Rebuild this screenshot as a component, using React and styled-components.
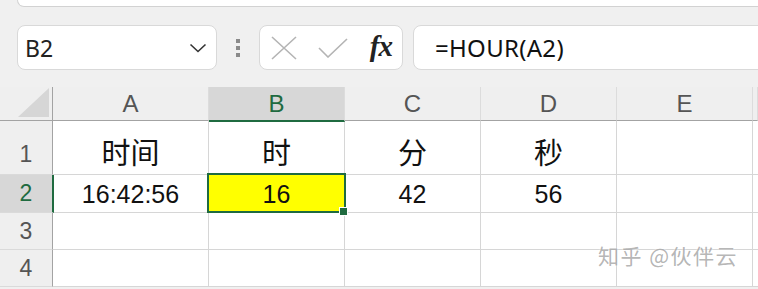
import React from 'react';
import styled, { createGlobalStyle } from 'styled-components';

const GlobalStyle = createGlobalStyle`
  html, body {
    margin: 0;
    padding: 0;
    background: #f0f0f0;
    overflow: hidden;
  }
  body {
    font-family: "Noto Sans", "Noto Sans CJK SC", sans-serif;
  }
`;

const columns = ['A', 'B', 'C', 'D', 'E'];
const rows = [
  { num: 1, height: 54, size: 29, cells: ['时间', '时', '分', '秒', ''] },
  { num: 2, height: 38, size: 25, cells: ['16:42:56', '16', '42', '56', ''] },
  { num: 3, height: 37, size: 25, cells: ['', '', '', '', ''] },
  { num: 4, height: 37, size: 25, cells: ['', '', '', '', ''] },
];

export default function App() {
  return (
    <Page>
      <GlobalStyle />
      <TopStrip>
        <TopBox />
      </TopStrip>
      <Toolbar>
        <NameBox>
          <span>B2</span>
          <svg width="18" height="10" viewBox="0 0 18 10">
            <path d="M1.5 1.5 L9 8.5 L16.5 1.5" fill="none" stroke="#333" strokeWidth="1.6" />
          </svg>
        </NameBox>
        <Grip>
          <i />
          <i />
          <i />
        </Grip>
        <FxBox>
          <svg width="26" height="24" viewBox="0 0 26 24">
            <path d="M1 1 L25 23 M25 1 L1 23" stroke="#b4b4b4" strokeWidth="1.6" />
          </svg>
          <svg width="30" height="20" viewBox="0 0 30 20">
            <path d="M1 10 L10 19 L29 1" fill="none" stroke="#b4b4b4" strokeWidth="1.6" />
          </svg>
          <Fx>fx</Fx>
        </FxBox>
        <FormulaInput>=HOUR(A2)</FormulaInput>
      </Toolbar>
      <Sheet>
        <Corner>
          <svg width="31" height="29" viewBox="0 0 31 29">
            <path d="M31 0 L31 29 L0 29 Z" fill="#d6d6d6" />
          </svg>
        </Corner>
        {columns.map((c) => (
          <ColHeader key={c} $active={c === 'B'}>{c}</ColHeader>
        ))}
        <ColHeader $rest />
        {rows.map((r) => (
          <React.Fragment key={r.num}>
            <RowHeader $active={r.num === 2} $h={r.height}>{r.num}</RowHeader>
            {r.cells.map((t, i) => (
              <Cell
                key={i}
                $size={r.size}
                $bottom={r.num === 1}
                $selected={r.num === 2 && i === 1}
                $fill={r.num === 2 && i === 1}
              >
                {t}
              </Cell>
            ))}
            <Cell $rest />
          </React.Fragment>
        ))}
      </Sheet>
      <Watermark>知乎 @伙伴云</Watermark>
    </Page>
  );
}

const Page = styled.div`
  position: relative;
  width: 758px;
  height: 289px;
  overflow: hidden;
  background: #f0f0f0;
`;

const TopStrip = styled.div`
  height: 25px;
  padding-left: 17px;
`;

const TopBox = styled.div`
  height: 6px;
  background: #fff;
  border: 1px solid #d2d2d2;
  border-top: none;
  border-radius: 0 0 9px 9px;
  margin-right: -20px;
`;

const Toolbar = styled.div`
  display: flex;
  align-items: stretch;
  height: 45px;
  padding-left: 17px;
  margin-bottom: 17px;
`;

const boxBase = `
  box-sizing: border-box;
  background: #fff;
  border: 1px solid #d9d9d9;
  border-radius: 8px;
  display: flex;
  align-items: center;
`;

const NameBox = styled.div`
  ${boxBase}
  width: 200px;
  padding: 0 9px 0 7px;
  justify-content: space-between;
  font-size: 23px;
  color: #222;
`;

const Grip = styled.div`
  width: 42px;
  display: flex;
  flex-direction: column;
  align-items: center;
  justify-content: center;
  gap: 3px;

  i {
    display: block;
    width: 4px;
    height: 4px;
    background: #8a8a8a;
  }
`;

const FxBox = styled.div`
  ${boxBase}
  width: 144px;
  padding: 0 10px 0 11px;
  justify-content: space-between;
`;

const Fx = styled.span`
  font-family: "Liberation Serif", serif;
  font-style: italic;
  font-weight: 700;
  font-size: 29px;
  color: #222;
  letter-spacing: -1px;
  margin-top: -3px;
`;

const FormulaInput = styled.div`
  ${boxBase}
  flex: 1;
  margin-left: 10px;
  margin-right: -20px;
  padding-left: 21px;
  font-size: 24px;
  letter-spacing: 0.3px;
  color: #111;
`;

const Sheet = styled.div`
  display: grid;
  grid-template-columns: 53px 156px 136px 136px 136px 136px 5px;
  grid-template-rows: 34px 54px 38px 37px 37px;
  background: #fff;
`;

const Corner = styled.div`
  background: #efefef;
  border-bottom: 1px solid #a3a3a3;
  border-right: 1px solid #a3a3a3;
  display: flex;
  align-items: flex-end;
  justify-content: flex-end;
  padding: 0 3px 3px 0;
`;

const ColHeader = styled.div`
  background: ${(p) => (p.$active ? '#d7d7d7' : '#efefef')};
  border-right: 1px solid #dcdcdc;
  border-bottom: ${(p) => (p.$active ? '2px solid #1f6b40' : '1px solid #a3a3a3')};
  margin-bottom: ${(p) => (p.$active ? '-1px' : '0')};
  display: flex;
  align-items: center;
  justify-content: center;
  font-family: "Liberation Sans", sans-serif;
  font-size: 24px;
  color: ${(p) => (p.$active ? '#1f6b40' : '#555')};
  z-index: 1;
`;

const RowHeader = styled.div`
  background: ${(p) => (p.$active ? '#d7d7d7' : '#efefef')};
  border-bottom: 1px solid #dadada;
  border-right: ${(p) => (p.$active ? '2px solid #1f6b40' : '1px solid #a3a3a3')};
  margin-right: ${(p) => (p.$active ? '-1px' : '0')};
  display: flex;
  align-items: center;
  justify-content: center;
  font-family: "Liberation Sans", sans-serif;
  font-size: 23px;
  color: ${(p) => (p.$active ? '#1f6b40' : '#555')};
  padding-top: ${(p) => (p.$h > 50 ? '14px' : '0')};
  z-index: 1;
`;

const Cell = styled.div`
  position: relative;
  box-sizing: border-box;
  border-right: ${(p) => (p.$rest ? 'none' : '1px solid #d6d6d6')};
  border-bottom: 1px solid #d6d6d6;
  background: ${(p) => (p.$fill ? '#ffff00' : '#fff')};
  display: flex;
  align-items: ${(p) => (p.$bottom ? 'flex-end' : 'center')};
  justify-content: center;
  padding-bottom: ${(p) => (p.$bottom ? '2px' : '0')};
  padding-top: ${(p) => (p.$bottom ? '0' : '2px')};
  font-family: "Liberation Sans", "Noto Sans CJK SC", sans-serif;
  font-size: ${(p) => p.$size}px;
  color: #111;

  ${(p) =>
    p.$selected &&
    `
    &::before {
      content: '';
      position: absolute;
      left: -2px;
      top: -2px;
      right: -2px;
      bottom: -1px;
      border: 2px solid #1f6b40;
      z-index: 2;
    }
    &::after {
      content: '';
      position: absolute;
      right: -4px;
      bottom: -4px;
      width: 7px;
      height: 7px;
      background: #1f6b40;
      border: 1px solid #fff;
      z-index: 3;
    }
  `}
`;

const Watermark = styled.div`
  position: absolute;
  right: 20px;
  bottom: 19px;
  font-family: "Noto Sans CJK SC", sans-serif;
  font-size: 21px;
  color: rgba(140, 140, 140, 0.65);
  text-shadow: 0 0 2px #fff;
  letter-spacing: 1.5px;
`;
